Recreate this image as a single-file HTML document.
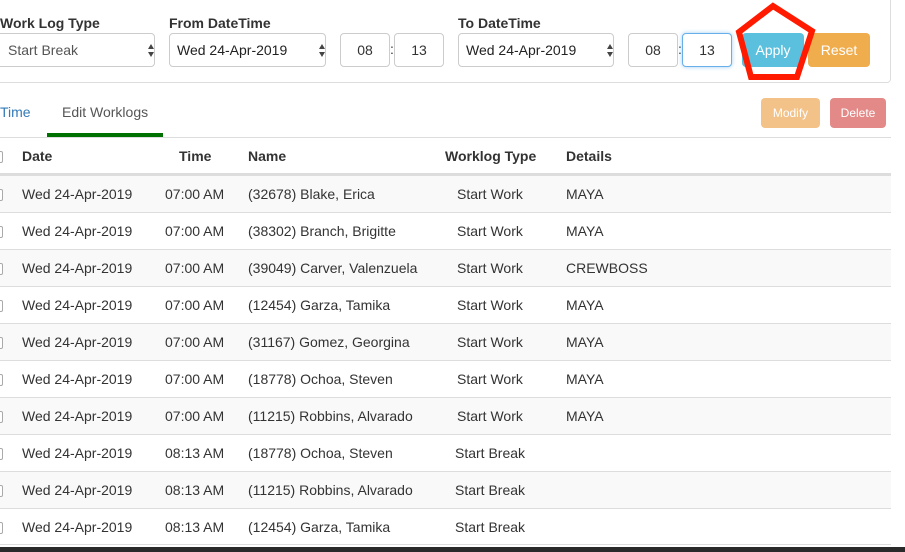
<!DOCTYPE html>
<html><head><meta charset="utf-8"><style>
*{box-sizing:border-box;margin:0;padding:0}
body{width:905px;height:552px;overflow:hidden;background:#fff;font-family:"Liberation Sans",Arial,sans-serif;color:#333;position:relative;font-size:14px}
.a{position:absolute}
.lbl{font-weight:bold;font-size:14px;color:#333}
.sel{position:absolute;height:34px;border:1px solid #ccc;border-radius:4px;background:#fff;font-size:14px;line-height:32px;padding-left:7px}
.sel.dk{color:#222}
.arr{position:absolute;right:6px;top:10px;width:0;height:0}
.arr:before{content:"";position:absolute;left:0;top:0;border-left:3.5px solid transparent;border-right:3.5px solid transparent;border-bottom:5px solid #444}
.arr:after{content:"";position:absolute;left:0;top:8px;border-left:3.5px solid transparent;border-right:3.5px solid transparent;border-top:5px solid #444}
.num{position:absolute;height:34px;width:50px;border:1px solid #ccc;border-radius:4px;text-align:center;line-height:32px;font-size:14px;background:#fff}
.btn{position:absolute;color:#fff;text-align:center;border-radius:4px;font-size:14px}
.row{position:absolute;left:0;width:891px;height:37px;border-top:1px solid #ddd;font-size:14px;line-height:36px}
.row.s{background:#f9f9f9}
.row span{position:absolute;top:0}
.cb{position:absolute;left:-9px;top:13px;width:12px;height:12px;border:1px solid #aaa;border-radius:2px;background:#fff}
</style></head><body>
<div class="a" style="left:-5px;top:-5px;width:896px;height:88px;border:1px solid #ddd;border-radius:4px"></div>
<div class="a lbl" style="left:0;top:15px">Work Log Type</div>
<div class="a lbl" style="left:169px;top:15px">From DateTime</div>
<div class="a lbl" style="left:458px;top:15px">To DateTime</div>
<div class="sel" style="left:-4px;top:33px;width:159px;color:#555;padding-left:11px">Start Break<div class="arr"></div></div>
<div class="sel dk" style="left:169px;top:33px;width:157px">Wed 24-Apr-2019<div class="arr"></div></div>
<div class="num" style="left:340px;top:33px">08</div>
<div class="a" style="left:390px;top:41px">:</div>
<div class="num" style="left:394px;top:33px">13</div>
<div class="sel dk" style="left:458px;top:33px;width:156px">Wed 24-Apr-2019<div class="arr"></div></div>
<div class="num" style="left:628px;top:33px">08</div>
<div class="a" style="left:678px;top:41px">:</div>
<div class="num" style="left:682px;top:33px;border-color:#66afe9;box-shadow:0 0 4px rgba(102,175,233,.6)">13</div>
<div class="btn" style="left:742px;top:33px;width:62px;height:34px;line-height:34px;background:#5bc0de">Apply</div>
<div class="btn" style="left:808px;top:33px;width:62px;height:34px;line-height:34px;background:#f0ad4e">Reset</div>
<svg class="a" style="left:0;top:0" width="905" height="100"><polygon points="773,6 739,32 751,77 797,77 812,31" fill="none" stroke="#ff1a00" stroke-width="6" stroke-linejoin="miter"/></svg>
<div class="a" style="left:0;top:104px;color:#337ab7;font-size:14px">Time</div>
<div class="a" style="left:62px;top:104px;color:#555;font-size:14px">Edit Worklogs</div>
<div class="a" style="left:47px;top:133px;width:116px;height:4px;background:#007000"></div>
<div class="a" style="left:0;top:137px;width:891px;height:1px;background:#ddd"></div>
<div class="btn" style="left:761px;top:98px;width:59px;height:30px;line-height:30px;background:#f3c288;font-size:12px">Modify</div>
<div class="btn" style="left:830px;top:98px;width:56px;height:30px;line-height:30px;background:#e38a88;font-size:12px">Delete</div>
<div class="a" style="left:0;top:138px;width:891px;height:37px;border-bottom:2px solid #ddd;font-weight:bold;line-height:36px">
<div class="cb"></div>
<span class="a" style="left:22px">Date</span><span class="a" style="left:179px">Time</span><span class="a" style="left:248px">Name</span><span class="a" style="left:445px">Worklog Type</span><span class="a" style="left:566px">Details</span></div>
<div class="row s" style="top:175px"><div class="cb"></div><span style="left:22px">Wed 24-Apr-2019</span><span style="left:165px">07:00 AM</span><span style="left:248px">(32678) Blake, Erica</span><span style="left:457px">Start Work</span><span style="left:566px">MAYA</span></div>
<div class="row" style="top:212px"><div class="cb"></div><span style="left:22px">Wed 24-Apr-2019</span><span style="left:165px">07:00 AM</span><span style="left:248px">(38302) Branch, Brigitte</span><span style="left:457px">Start Work</span><span style="left:566px">MAYA</span></div>
<div class="row s" style="top:249px"><div class="cb"></div><span style="left:22px">Wed 24-Apr-2019</span><span style="left:165px">07:00 AM</span><span style="left:248px">(39049) Carver, Valenzuela</span><span style="left:457px">Start Work</span><span style="left:566px">CREWBOSS</span></div>
<div class="row" style="top:286px"><div class="cb"></div><span style="left:22px">Wed 24-Apr-2019</span><span style="left:165px">07:00 AM</span><span style="left:248px">(12454) Garza, Tamika</span><span style="left:457px">Start Work</span><span style="left:566px">MAYA</span></div>
<div class="row s" style="top:323px"><div class="cb"></div><span style="left:22px">Wed 24-Apr-2019</span><span style="left:165px">07:00 AM</span><span style="left:248px">(31167) Gomez, Georgina</span><span style="left:457px">Start Work</span><span style="left:566px">MAYA</span></div>
<div class="row" style="top:360px"><div class="cb"></div><span style="left:22px">Wed 24-Apr-2019</span><span style="left:165px">07:00 AM</span><span style="left:248px">(18778) Ochoa, Steven</span><span style="left:457px">Start Work</span><span style="left:566px">MAYA</span></div>
<div class="row s" style="top:397px"><div class="cb"></div><span style="left:22px">Wed 24-Apr-2019</span><span style="left:165px">07:00 AM</span><span style="left:248px">(11215) Robbins, Alvarado</span><span style="left:457px">Start Work</span><span style="left:566px">MAYA</span></div>
<div class="row" style="top:434px"><div class="cb"></div><span style="left:22px">Wed 24-Apr-2019</span><span style="left:165px">08:13 AM</span><span style="left:248px">(18778) Ochoa, Steven</span><span style="left:455px">Start Break</span></div>
<div class="row s" style="top:471px"><div class="cb"></div><span style="left:22px">Wed 24-Apr-2019</span><span style="left:165px">08:13 AM</span><span style="left:248px">(11215) Robbins, Alvarado</span><span style="left:455px">Start Break</span></div>
<div class="row" style="top:508px;border-bottom:1px solid #ddd"><div class="cb"></div><span style="left:22px">Wed 24-Apr-2019</span><span style="left:165px">08:13 AM</span><span style="left:248px">(12454) Garza, Tamika</span><span style="left:455px">Start Break</span></div>
<div class="a" style="left:0;top:547px;width:905px;height:5px;background:#2a2a2a"></div>
</body></html>
